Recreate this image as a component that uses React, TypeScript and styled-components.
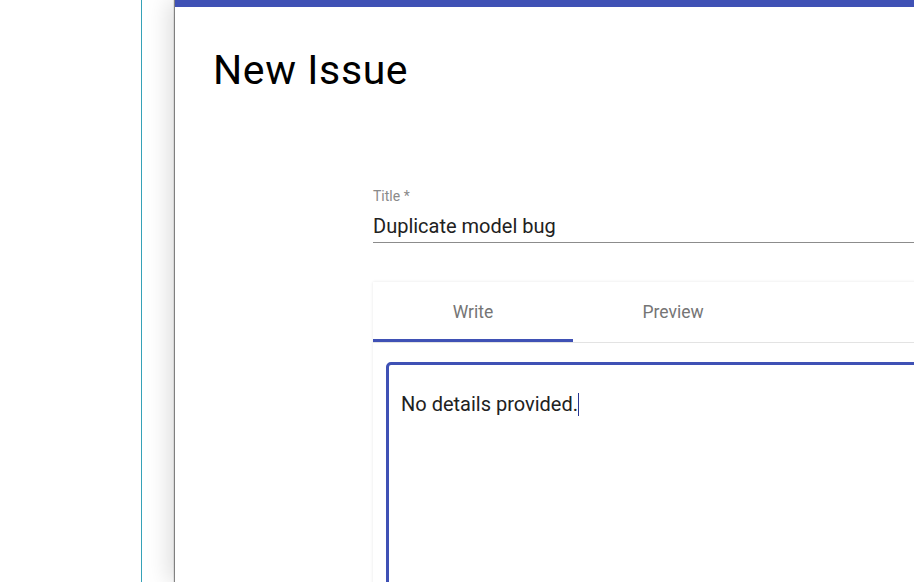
import React from "react";
import styled, { createGlobalStyle } from "styled-components";

const GlobalStyle = createGlobalStyle`
  html, body {
    margin: 0;
    padding: 0;
    height: 100%;
    overflow: hidden;
    background: #ffffff;
    font-family: Roboto, "Noto Sans", Arial, sans-serif;
  }
`;

export const Page = styled.div`
  display: flex;
  height: 100vh;
  overflow: hidden;
`;

export const Sidebar = styled.div`
  flex: none;
  width: 141px;
  border-right: 1px solid #36a2b8;
`;

export const Drawer = styled.div`
  flex: none;
  width: 1000px;
  margin-left: 33px;
  border-top: 7px solid #3f51b5;
  background: #ffffff;
  box-shadow: -1px 0 1px rgba(0, 0, 0, 0.45), -6px 0 22px rgba(0, 0, 0, 0.14);
  padding-left: 38px;
`;

export const Heading = styled.h1`
  margin: 39px 0 0;
  font-size: 41px;
  line-height: 48px;
  font-weight: 400;
  letter-spacing: 0.6px;
  color: #000000;
`;

export const Form = styled.div`
  margin: 94px 0 0 160px;
  width: 700px;
`;

export const Label = styled.label`
  display: block;
  font-size: 14px;
  line-height: 16px;
  color: #8a8a8a;
`;

export const TitleInput = styled.div`
  margin-top: 10px;
  font-size: 20px;
  line-height: 24px;
  color: #212121;
  padding-bottom: 4px;
  border-bottom: 1px solid #8c8c8c;
`;

export const Card = styled.div`
  margin-top: 39px;
  background: #ffffff;
  box-shadow: 0 0 3px rgba(0, 0, 0, 0.1);
`;

export const TabList = styled.div`
  display: flex;
  border-bottom: 1px solid #e3e3e3;
`;

export const Tab = styled.div<{ active?: boolean }>`
  box-sizing: border-box;
  width: 200px;
  height: 60px;
  padding-top: 2px;
  display: flex;
  align-items: center;
  justify-content: center;
  font-size: 17.5px;
  color: #757575;
  border-bottom: 3px solid ${({ active }) => (active ? "#3f51b5" : "transparent")};
`;

export const CardBody = styled.div`
  padding: 19px 13px;
`;

export const Editor = styled.div`
  height: 240px;
  border: 3px solid #3f51b5;
  border-radius: 5px;
  padding: 27px 12px 0;
  font-size: 20px;
  line-height: 24px;
  color: #212121;
`;

export const Caret = styled.span`
  display: inline-block;
  width: 0;
  height: 23px;
  border-left: 1px solid #283593;
  vertical-align: -5px;
`;

export default function App() {
  return (
    <>
      <GlobalStyle />
      <Page>
        <Sidebar />
        <Drawer>
          <Heading>New Issue</Heading>
          <Form>
            <Label>Title *</Label>
            <TitleInput>Duplicate model bug</TitleInput>
            <Card>
              <TabList>
                <Tab active>Write</Tab>
                <Tab>Preview</Tab>
              </TabList>
              <CardBody>
                <Editor>
                  No details provided.
                  <Caret />
                </Editor>
              </CardBody>
            </Card>
          </Form>
        </Drawer>
      </Page>
    </>
  );
}
